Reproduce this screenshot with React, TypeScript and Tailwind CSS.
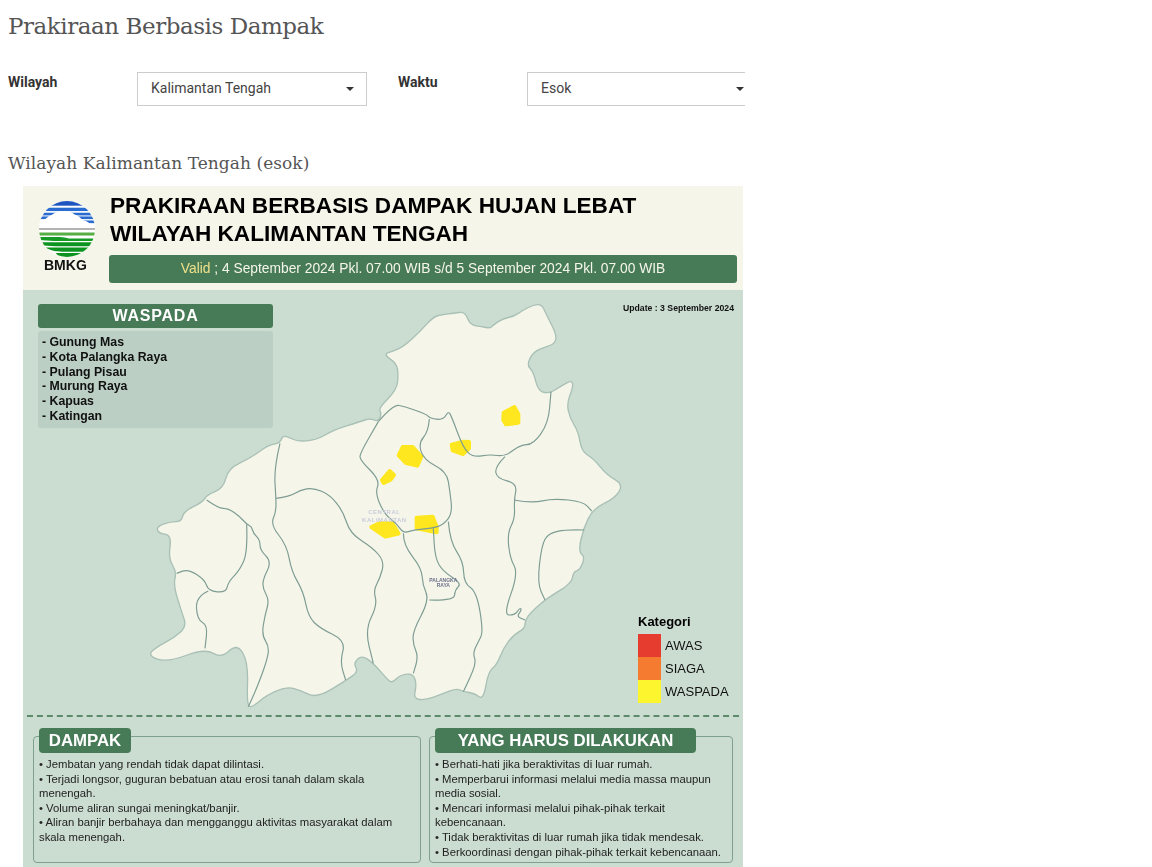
import type { ReactNode } from "react";

type Pt = [number, number];

// map traced at 3x, x values of the eastern half are offset by 630
const east: Pt[] = [
  [100, 178], [130, 168], [160, 155], [210, 110], [250, 65], [280, 58], [310, 55], [345, 50], [360, 90], [395, 95],
  [420, 100], [430, 90], [460, 70], [490, 65], [520, 45], [550, 30], [575, 28], [590, 60], [620, 120], [615, 145],
  [590, 155], [550, 170], [530, 210], [550, 230], [565, 290], [600, 295], [630, 275], [665, 255], [670, 275], [650, 325],
  [660, 370], [685, 410], [695, 470], [730, 490], [770, 540], [820, 568], [795, 610], [730, 640], [700, 700], [685, 770],
  [705, 785], [690, 825], [670, 830], [665, 865], [590, 910], [545, 950], [525, 975], [525, 1000], [490, 1020], [460, 1060],
  [440, 1110], [415, 1130], [400, 1215], [375, 1195], [340, 1190], [320, 1180], [280, 1195], [230, 1215], [190, 1212], [200, 1170],
  [190, 1135], [150, 1140], [125, 1165], [110, 1150], [70, 1105], [35, 1080],
];

const west: Pt[] = [
  [640, 1105], [655, 1130], [620, 1155], [530, 1210], [480, 1185], [440, 1175], [380, 1200], [340, 1235], [320, 1235], [325, 1100],
  [290, 1045], [245, 1090], [195, 1060], [80, 1103], [20, 1080], [60, 1050], [100, 1030], [140, 995], [125, 950], [100, 870],
  [110, 830], [85, 790], [95, 720], [55, 715], [50, 695], [90, 680], [125, 680], [130, 650], [190, 620], [200, 600],
  [250, 580], [265, 520], [330, 490], [385, 450], [420, 445], [430, 418], [470, 440], [530, 435], [580, 405], [660, 380],
  [690, 370], [715, 380], [725, 355], [715, 340], [770, 285], [775, 240], [770, 205],
];

const westLines: Pt[][] = [
  [[200, 615], [235, 640], [265, 640], [300, 665], [320, 688], [335, 695], [340, 715], [360, 735], [360, 765], [395, 800], [370, 850], [368, 880], [388, 915], [375, 960], [365, 1020], [388, 1055], [380, 1100], [350, 1180], [325, 1235]],
  [[320, 688], [323, 770], [300, 825], [265, 860], [258, 893], [205, 888], [195, 855], [145, 822], [110, 835]],
  [[205, 888], [167, 905], [172, 975], [203, 990], [195, 1060]],
  [[420, 445], [402, 520], [408, 610], [408, 650], [392, 690], [440, 750], [455, 830], [490, 890], [505, 965], [540, 1000], [617, 1037], [600, 1100], [617, 1155]],
  [[408, 610], [450, 605], [480, 585], [520, 578], [570, 600], [610, 650], [630, 715], [700, 760], [733, 800], [720, 850], [700, 885], [712, 930], [675, 1005], [700, 1105]],
];

const eastLines: Pt[][] = [
  [[85, 380], [130, 328], [165, 335], [230, 358], [240, 370], [280, 375], [295, 348], [305, 365], [340, 460], [370, 487], [420, 478], [465, 485], [510, 450], [550, 448], [595, 385], [603, 290]],
  [[238, 372], [235, 410], [205, 445], [222, 495], [290, 530], [300, 590], [307, 655], [280, 690], [245, 700], [190, 705], [160, 715], [140, 685], [105, 660], [75, 595], [90, 555], [30, 495], [30, 475], [85, 380]],
  [[160, 715], [160, 750], [215, 820], [218, 870], [238, 915], [188, 1010], [190, 1050], [205, 1085], [190, 1135]],
  [[238, 915], [312, 917], [315, 885], [335, 865], [280, 830], [255, 790], [250, 700]],
  [[295, 680], [300, 740], [340, 800], [342, 865], [380, 890], [400, 1010], [385, 1040], [368, 1075], [380, 1105], [340, 1190]],
  [[465, 485], [435, 515], [440, 550], [502, 565], [492, 615], [495, 670], [472, 715], [480, 790], [505, 835], [460, 960], [495, 960], [510, 938], [515, 945], [500, 965], [525, 975]],
  [[492, 615], [545, 625], [610, 610], [700, 620], [725, 648]],
  [[703, 705], [650, 703], [595, 715], [575, 750], [562, 865], [585, 915]],
];

const blobs: Pt[][] = [
  [[461, 353], [493, 336], [505, 357], [505, 383], [468, 388], [460, 375]],
  [[305, 449], [340, 440], [357, 441], [357, 460], [339, 477], [308, 466]],
  [[146, 481], [158, 456], [188, 456], [214, 485], [202, 512], [168, 504]],
  [[96, 555], [119, 528], [132, 540], [122, 554], [101, 564]],
  [[200, 668], [248, 665], [260, 695], [260, 712], [200, 700]],
  [[64, 696], [88, 685], [127, 685], [146, 716], [106, 725]],
];

const shift = (pts: Pt[]) => pts.map(([x, y]): Pt => [x + 630, y]);

const toD = (pts: Pt[]) => pts.map(([x, y], i) => `${i === 0 ? "M" : "L"}${x} ${y}`).join(" ") + " Z";

// rounds the traced corners off with quadratic segments through the midpoints
function smooth(pts: Pt[], closed = false) {
  const mid = (a: Pt, b: Pt) => `${(a[0] + b[0]) / 2} ${(a[1] + b[1]) / 2}`;
  if (closed) {
    let d = `M${mid(pts[pts.length - 1], pts[0])}`;
    pts.forEach((p, i) => {
      d += ` Q${p[0]} ${p[1]} ${mid(p, pts[(i + 1) % pts.length])}`;
    });
    return d + " Z";
  }
  let d = `M${pts[0][0]} ${pts[0][1]}`;
  for (let i = 1; i < pts.length - 1; i++) {
    d += ` Q${pts[i][0]} ${pts[i][1]} ${mid(pts[i], pts[i + 1])}`;
  }
  const last = pts[pts.length - 1];
  return d + ` L${last[0]} ${last[1]}`;
}

function KalimantanMap() {
  return (
    <svg viewBox="0 0 1560 1260" className="absolute left-[117px] top-[5px] h-[420px] w-[520px]" fill="none" strokeLinejoin="round">
      <path d={smooth([...shift(east), ...west], true)} fill="#f5f6e9" stroke="#a9c0b6" strokeWidth="4" />
      {blobs.map((b, i) => (
        <path key={i} d={toD(shift(b))} fill="#fee71e" stroke="#fee71e" strokeWidth="12" />
      ))}
      {westLines.map((l, i) => (
        <path key={i} d={smooth(l)} stroke="#7d9c93" strokeWidth="3.5" />
      ))}
      {eastLines.map((l, i) => (
        <path key={i} d={smooth(shift(l))} stroke="#7d9c93" strokeWidth="3.5" />
      ))}
      <g fontFamily="'Liberation Sans', sans-serif" fontWeight="700" textAnchor="middle">
        <text x="733" y="658" fontSize="18" letterSpacing="1.5" fill="#c9cbdc">CENTRAL</text>
        <text x="733" y="682" fontSize="18" letterSpacing="1.5" fill="#c9cbdc">KALIMANTAN</text>
        <text x="910" y="860" fontSize="15" fill="#6d6f8c">PALANGKA</text>
        <text x="910" y="877" fontSize="15" fill="#6d6f8c">RAYA</text>
      </g>
    </svg>
  );
}

function BmkgLogo() {
  return (
    <svg viewBox="0 0 167 167" className="ml-px h-[56px] w-[56px]">
      <defs>
        <clipPath id="logo-disc">
          <circle cx="83.5" cy="83.5" r="83.5" />
        </clipPath>
      </defs>
      <g clipPath="url(#logo-disc)">
        <rect width="167" height="167" fill="#fff" />
        <rect y="0" width="167" height="14" fill="#1f55c0" />
        <rect y="20" width="167" height="10" fill="#2a6bd0" />
        <rect y="35" width="167" height="8" fill="#2a6bd0" />
        <rect y="46" width="167" height="8" fill="#2a6bd0" />
        <rect x="100" y="58" width="67" height="8" fill="#2a6bd0" />
        <path d="M0 62 C18 62 22 46 38 42 C50 28 92 26 106 40 C120 42 124 56 140 60 L167 76 V82 H0 Z" fill="#fff" />
        <rect y="82" width="167" height="3" fill="#6b6b6b" />
        <rect y="94" width="167" height="9" fill="#56ae45" />
        <path d="M0 107 H60 C75 107 85 112 100 112 H167 V119 H90 C60 119 30 119 0 116 Z" fill="#159a26" />
        <path d="M0 123 H167 V135 H100 C70 135 30 135 0 131 Z" fill="#0d9420" />
        <path d="M20 139 H167 V151 H70 C50 151 35 149 20 139 Z" fill="#0d9420" />
        <path d="M50 155 H130 L105 167 H60 Z" fill="#0d9420" />
      </g>
    </svg>
  );
}

function FakeSelect({ value, className }: { value: string; className: string }) {
  return (
    <div className={`flex h-[34px] shrink-0 items-center justify-between border border-[#ccc] bg-white pb-[2px] pl-[13px] pr-3 text-sm text-[#444] ${className}`}>
      <span>{value}</span>
      <span className="mt-[2px] h-0 w-0 border-x-4 border-t-4 border-x-transparent border-t-[#333]" />
    </div>
  );
}

function InfoBox({ title, tabClass, className, children }: { title: string; tabClass: string; className: string; children: ReactNode }) {
  return (
    <div className={`h-[127px] rounded border border-[#7fa08f] px-[5px] ${className}`}>
      <div className={`-mt-[9px] flex h-[25px] items-center justify-center rounded bg-[#477a57] text-[16.8px] font-bold text-white ${tabClass}`}>
        {title}
      </div>
      <div className="mt-1 text-[11.3px] leading-[14.6px] text-[#222]">{children}</div>
    </div>
  );
}

export default function App() {
  return (
    <div className="h-[867px] w-[745px] overflow-hidden bg-white pl-2 font-['Roboto',sans-serif]">
      <h1 className="pt-[11px] font-['DejaVu_Serif',serif] text-[23px] leading-[30px] tracking-[-0.45px] text-[#555]">Prakiraan Berbasis Dampak</h1>

      <div className="mt-[31px] flex w-[900px]">
        <label className="w-[129px] text-sm font-bold text-[#333]">Wilayah</label>
        <FakeSelect value="Kalimantan Tengah" className="w-[230px]" />
        <label className="ml-[31px] w-[129px] text-sm font-bold text-[#333]">Waktu</label>
        <FakeSelect value="Esok" className="w-[230px]" />
      </div>

      <h2 className="mt-[45px] font-['DejaVu_Serif',serif] text-[17px] leading-6 tracking-[0.06px] text-[#555]">Wilayah Kalimantan Tengah (esok)</h2>

      <div className="ml-[15px] mt-[11px] w-[720px] font-['Liberation_Sans',sans-serif] blur-[0.3px]">
        <div className="flex h-[104px] bg-[#f5f6e9] pl-[15px]">
          <div className="flex w-[71px] shrink-0 flex-col items-start pt-[15px]">
            <BmkgLogo />
            <span className="ml-[6px] text-sm font-bold leading-4 text-[#111]">BMKG</span>
          </div>
          <div className="flex-1 pr-[6px] pt-[6px]">
            <div className="pl-px text-[22.6px] font-bold leading-7 text-black">
              PRAKIRAAN BERBASIS DAMPAK HUJAN LEBAT
              <br />
              WILAYAH KALIMANTAN TENGAH
            </div>
            <div className="mt-[7px] flex h-7 items-center justify-center rounded-[3px] bg-[#477a57] text-[13.8px] text-[#f5f6e9]">
              <span className="text-[#eee08a]">Valid</span>&nbsp;; 4 September 2024 Pkl. 07.00 WIB s/d 5 September 2024 Pkl. 07.00 WIB
            </div>
          </div>
        </div>

        <div className="relative h-[425px] bg-[#cbdcd1] pl-[15px] pt-[14px]">
          <KalimantanMap />
          <div className="relative w-[235px]">
            <div className="flex h-6 items-center justify-center rounded-[3px] bg-[#477a57] text-base font-bold tracking-wider text-white">WASPADA</div>
            <div className="mt-[3px] h-[97px] rounded-[3px] bg-[#bbcfc4] px-1 pt-1 text-[12.3px] font-bold leading-[14.8px] text-[#111]">
              <div>- Gunung Mas</div>
              <div>- Kota Palangka Raya</div>
              <div>- Pulang Pisau</div>
              <div>- Murung Raya</div>
              <div>- Kapuas</div>
              <div>- Katingan</div>
            </div>
          </div>
          <div className="absolute right-[9px] top-[12px] text-[8.7px] font-bold leading-3 text-[#111]">Update : 3 September 2024</div>
          <div className="absolute left-[615px] top-[324px]">
            <div className="text-[13px] font-bold leading-4 text-black">Kategori</div>
            <div className="mt-1 flex h-[23px] items-center gap-1 text-[13px] text-[#111]"><span className="h-full w-[23px] bg-[#e63c2f]" />AWAS</div>
            <div className="flex h-[23px] items-center gap-1 text-[13px] text-[#111]"><span className="h-full w-[23px] bg-[#f47b30]" />SIAGA</div>
            <div className="flex h-[23px] items-center gap-1 text-[13px] text-[#111]"><span className="h-full w-[23px] bg-[#fdf52e]" />WASPADA</div>
          </div>
        </div>

        <div className="h-[200px] bg-[#cbdcd1] px-1">
          <div className="border-t-2 border-dashed border-[#5d8a6c]" />
          <div className="ml-[6px] mt-[19px] flex gap-2">
            <InfoBox title="DAMPAK" tabClass="w-[92px]" className="w-[388px]">
              <div>• Jembatan yang rendah tidak dapat dilintasi.</div>
              <div>• Terjadi longsor, guguran bebatuan atau erosi tanah dalam skala menengah.</div>
              <div>• Volume aliran sungai meningkat/banjir.</div>
              <div>• Aliran banjir berbahaya dan mengganggu aktivitas masyarakat dalam skala menengah.</div>
            </InfoBox>
            <InfoBox title="YANG HARUS DILAKUKAN" tabClass="w-[261px]" className="w-[304px]">
              <div>• Berhati-hati jika beraktivitas di luar rumah.</div>
              <div>• Memperbarui informasi melalui media massa maupun media sosial.</div>
              <div>• Mencari informasi melalui pihak-pihak terkait kebencanaan.</div>
              <div>• Tidak beraktivitas di luar rumah jika tidak mendesak.</div>
              <div>• Berkoordinasi dengan pihak-pihak terkait kebencanaan.</div>
            </InfoBox>
          </div>
        </div>
      </div>
    </div>
  );
}
